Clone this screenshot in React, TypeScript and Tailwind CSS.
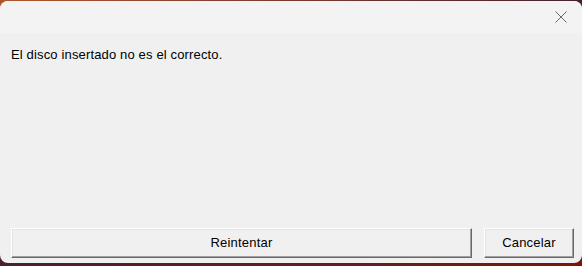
import React from 'react';

const CloseGlyph = () => (
  <svg width="12" height="12" viewBox="0 0 12 12" className="block">
    <path d="M0.5 0.5 L11.5 11.5 M11.5 0.5 L0.5 11.5" stroke="#6b6b6b" strokeWidth="1" fill="none" />
  </svg>
);

const Win32Button = ({ label, className }: { label: string; className: string }) => (
  <button
    className={`h-[30px] pb-[2px] bg-[#f0f0f0] border-t border-l border-t-white border-l-white border-b border-r border-b-[#696969] border-r-[#696969] shadow-[inset_-1px_-1px_0_#a0a0a0,inset_1px_1px_0_#e3e3e3] text-[13px] tracking-[0.2px] text-black leading-none flex items-center justify-center ${className}`}
  >
    {label}
  </button>
);

export default function App() {
  return (
    <div
      className="w-[582px] h-[266px] overflow-hidden pt-[1px] bg-gradient-to-br from-[#b0562a] via-[#4a1f2c] to-[#7a1608]"
      style={{ fontFamily: '"Liberation Sans", Arial, sans-serif' }}
    >
      <div className="h-[262px] rounded-[8px] overflow-hidden bg-[#f0f0f0] flex flex-col">
        {/* title bar */}
        <div className="h-[32px] bg-[#f3f3f3] flex items-start justify-end pr-[15px] pt-[10px]">
          <CloseGlyph />
        </div>

        {/* message */}
        <div className="flex-1 pl-[11px] pt-[14px]">
          <p className="text-[13px] tracking-[0.15px] text-black leading-[15px]">El disco insertado no es el correcto.</p>
        </div>

        {/* buttons */}
        <div className="flex items-center gap-[12px] pl-[11px] pr-[8px] pb-[5px]">
          <Win32Button label="Reintentar" className="w-[461px]" />
          <Win32Button label="Cancelar" className="w-[90px]" />
        </div>
      </div>
    </div>
  );
}
